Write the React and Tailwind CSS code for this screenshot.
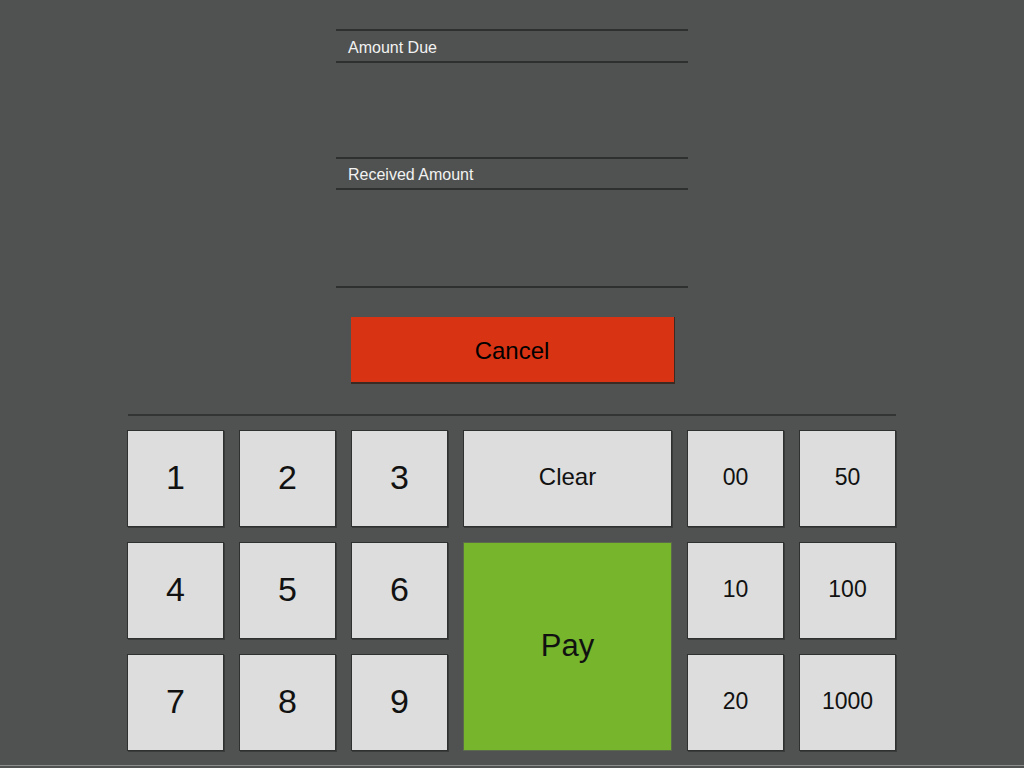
export default function App() {
  const font = { fontFamily: '"Liberation Sans", Arial, sans-serif' };
  const key =
    "flex items-center justify-center pb-[3px] bg-[#dcdddc] border border-[#2f3030] text-[#111] shadow-[1px_1px_0_#3a3b3b]";
  return (
    <div
      className="w-[1024px] h-[768px] bg-[#505251] flex flex-col items-center overflow-hidden"
      style={font}
    >
      <div className="mt-[29px] w-[352px] flex flex-col">
        <div className="h-[2px] bg-[#2e2f2f]" />
        <div className="h-[30px] flex items-center pl-[12px] pt-[3px] text-[16px] text-[#f2f2f2]">
          Amount Due
        </div>
        <div className="h-[2px] bg-[#2e2f2f]" />
        <div className="h-[94px]" />
        <div className="h-[2px] bg-[#2e2f2f]" />
        <div className="h-[29px] flex items-center pl-[12px] pt-[3px] text-[16px] text-[#f2f2f2]">
          Received Amount
        </div>
        <div className="h-[2px] bg-[#2e2f2f]" />
        <div className="h-[96px]" />
        <div className="h-[2px] bg-[#2e2f2f]" />
      </div>
      <button className="mt-[29px] ml-[1px] w-[324px] h-[67px] pt-[3px] bg-[#d83413] border-b-2 border-r border-[#3a2a22] text-[24px] text-black flex items-center justify-center">
        Cancel
      </button>
      <div className="mt-[30px] w-[768px] h-[2px] bg-[#333434]" />
      <div className="self-start ml-[127px] mt-[14px] grid grid-cols-[97px_97px_97px_209px_97px_97px] grid-rows-[97px_97px_97px] gap-[15px]">
        <div className={key + " text-[34px]"}>1</div>
        <div className={key + " text-[34px]"}>2</div>
        <div className={key + " text-[34px]"}>3</div>
        <div className={key + " text-[24px]"}>Clear</div>
        <div className={key + " text-[23px]"}>00</div>
        <div className={key + " text-[23px]"}>50</div>
        <div className={key + " text-[34px]"}>4</div>
        <div className={key + " text-[34px]"}>5</div>
        <div className={key + " text-[34px]"}>6</div>
        <div className="row-span-2 flex items-center justify-center pb-[1px] bg-[#76b52c] border border-[#5c6a4c] text-[31px] text-[#111]">
          Pay
        </div>
        <div className={key + " text-[23px]"}>10</div>
        <div className={key + " text-[23px]"}>100</div>
        <div className={key + " text-[34px]"}>7</div>
        <div className={key + " text-[34px]"}>8</div>
        <div className={key + " text-[34px]"}>9</div>
        <div className={key + " text-[23px]"}>20</div>
        <div className={key + " text-[23px]"}>1000</div>
      </div>
      <div className="mt-[14px] w-full h-[1px] bg-[#8c8d8c]" />
    </div>
  );
}
